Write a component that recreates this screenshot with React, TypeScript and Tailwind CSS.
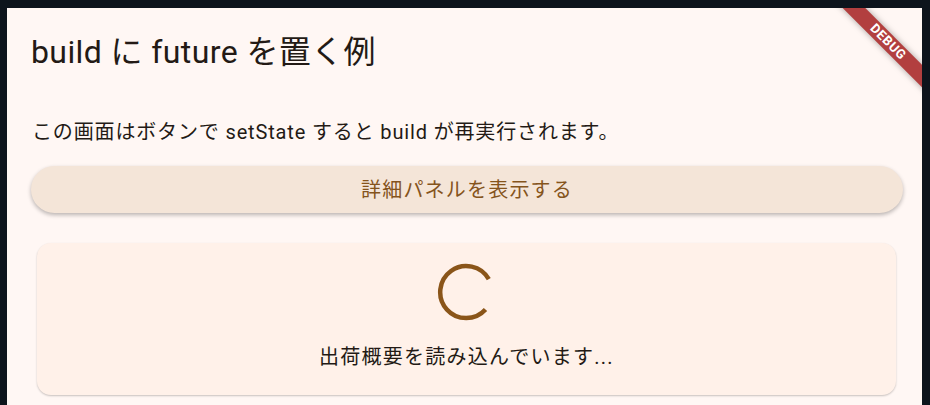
import { useState } from "react"

const font = "font-['Roboto','Noto_Sans_CJK_JP',sans-serif]"

function Spinner() {
  // arc with an opening on the right, like Flutter's CircularProgressIndicator mid-spin
  return (
    <svg width="60" height="60" viewBox="0 0 60 60">
      <path
        d="M 48.5 46.5 A 26 26 0 1 1 51.8 16.2"
        fill="none"
        stroke="#8a5519"
        strokeWidth="4.5"
      />
    </svg>
  )
}

function DebugBanner() {
  return (
    <div className="pointer-events-none absolute top-0 right-0 h-[110px] w-[110px] overflow-hidden">
      <div className="absolute top-[26px] right-[-46px] h-[16px] w-[160px] rotate-45 bg-[#b23f3f] text-center text-[13px] font-bold leading-[16px] tracking-[0.6px] text-white shadow-[0_0_6px_rgba(0,0,0,0.35)] font-['Roboto',sans-serif]">
        DEBUG
      </div>
    </div>
  )
}

export default function App() {
  const [open, setOpen] = useState(false)

  return (
    <div className={`h-[405px] w-[930px] bg-[#0d141c] pt-[8px] pl-[7px] pr-[8px] ${font}`}>
      <div className="relative flex h-full flex-col overflow-hidden bg-[#fff7f4] text-[#231a15]">
        <h1 className="pt-[24px] pl-[24px] text-[32px] leading-[40px] tracking-[0.4px]">build に future を置く例</h1>

        <p className="mt-[46px] pl-[25px] text-[20px] leading-[28px] tracking-[0.85px]">
          この画面はボタンで setState すると build が再実行されます。
        </p>

        <button
          onClick={() => setOpen(!open)}
          className="mt-[20px] mr-[19px] ml-[24px] h-[47px] rounded-full bg-[#f4e5d8] text-[20px] leading-[28px] tracking-[1.2px] text-[#85541c] shadow-[0_2px_4px_rgba(0,0,0,0.28)]"
        >
          詳細パネルを表示する
        </button>

        <div className="mt-[30px] ml-[30px] flex h-[152px] w-[859px] flex-col items-center rounded-[14px] bg-[#fff1e9] pt-[20px] shadow-[0_1px_2px_rgba(0,0,0,0.22)]">
          <Spinner />
          <p className="mt-[20px] text-[20px] leading-[28px] tracking-[1.25px]">出荷概要を読み込んでいます...</p>
        </div>

        <DebugBanner />
      </div>
    </div>
  )
}
